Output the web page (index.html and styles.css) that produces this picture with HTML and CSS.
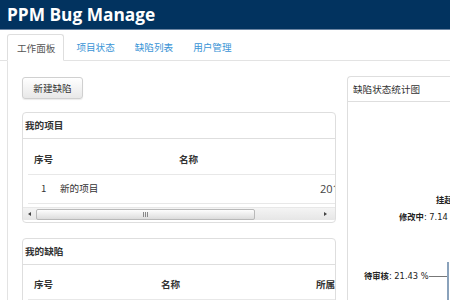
FILE: index.html
```html
<!DOCTYPE html>
<html lang="zh-CN">
<head>
<meta charset="utf-8">
<link rel="stylesheet" href="styles.css">
</head>
<body>
<div class="header"><span class="brand">PPM Bug Manage</span></div>
<div class="tabs">
  <span class="tab active">工作面板</span>
  <span class="tab">项目状态</span>
  <span class="tab">缺陷列表</span>
  <span class="tab">用户管理</span>
</div>
<div class="pane">
  <div class="leftcol">
    <button class="btn">新建缺陷</button>
    <div class="panel p1">
      <div class="ph">我的项目</div>
      <div class="tablewrap">
        <div class="trow thead">
          <span class="c1">序号</span><span class="c2">名称</span><span class="c3"></span>
        </div>
        <div class="trow tbody">
          <span class="c1 num">1</span><span class="c2b">新的项目</span><span class="c3 date">2014-05-01</span>
        </div>
      </div>
      <div class="scrollbar">
        <span class="arrow left"></span>
        <span class="thumb"><span class="grip"></span></span>
        <span class="arrow right"></span>
      </div>
    </div>
    <div class="panel p2">
      <div class="ph">我的缺陷</div>
      <div class="tablewrap">
        <div class="trow thead t2">
          <span class="d1">序号</span><span class="d2">名称</span><span class="d3">所属项目</span>
        </div>
      </div>
    </div>
  </div>
  <div class="rightcol">
    <div class="panel chartpanel">
      <div class="ph rh">缺陷状态统计图</div>
      <div class="chart">
        <span class="lbl l1"><b>挂起</b>: 7.14 %</span>
        <span class="lbl l2"><b>修改中</b>: 7.14 %</span>
        <span class="lbl l3"><b>待审核</b>: 21.43 %</span>
        <span class="leader"></span>
        <span class="pie"></span>
      </div>
    </div>
  </div>
</div>
</body>
</html>
```
FILE: styles.css
```css
* { box-sizing: border-box; }
html, body { margin: 0; padding: 0; width: 450px; height: 300px; overflow: hidden; background: #fff; }
body { font-family: "Noto Sans CJK SC", "Open Sans", sans-serif; font-size: 9.6px; color: #333; }

.header { height: 30px; background: #02335f; border-bottom: 1px solid #6d86a3; padding-left: 7px; }
.brand { font-family: "Open Sans", "Liberation Sans", sans-serif; font-weight: 700; font-size: 17.3px; color: #fff; line-height: 29px; display: inline-block; }

.tabs { display: flex; margin-top: 4px; padding-left: 7px; height: 27px; border-bottom: 1px solid #e3e3e3; }
.tab { display: block; flex: none; white-space: nowrap; padding: 0 10px 0 10px; line-height: 26px; color: #3a94d6; }
.tab.active { color: #555; border: 1px solid #dedede; border-bottom-color: #fff; border-radius: 3px 3px 0 0; background: #fff; height: 27px; padding: 0 8px 0 9px; margin-right: 2px; }

.pane { display: flex; margin-left: 7px; border-left: 1px solid #e3e3e3; padding: 15px 0 0 14px; gap: 11px; height: 240px; }
.leftcol { width: 314px; flex: none; display: flex; flex-direction: column; align-items: flex-start; }
.rightcol { flex: none; width: 120px; }

.btn { flex: none; font-family: inherit; font-size: 9.6px; color: #333; width: 61px; height: 22px; margin-top: 1px; border: 1px solid #d0d0d0; border-radius: 3px; background: linear-gradient(#ffffff, #e8e8e8); box-shadow: 0 1px 1px rgba(0,0,0,0.08); padding: 0; }

.panel { flex: none; border: 1px solid #dedede; border-radius: 4px; background: #fff; width: 314px; overflow: hidden; }
.p1 { margin-top: 13px; height: 111px; }
.p2 { margin-top: 15px; height: 80px; }
.ph { height: 26px; line-height: 25px; padding-left: 2px; font-weight: 700; color: #333; border-bottom: 1px solid #dedede; }

.tablewrap { padding: 0 0 0 5px; overflow: hidden; white-space: nowrap; }
.trow { display: flex; width: 400px; border-bottom: 1px solid #e8e8e8; }
.thead { height: 36px; padding-top: 13px; font-weight: 700; color: #333; }
.tbody { height: 29px; line-height: 27px; }
.c1 { width: 151px; padding-left: 6px; flex: none; }
.num { padding-left: 13px; width: 32px; }
.c2 { width: 140px; flex: none; }
.c2b { width: 260px; flex: none; }
.c3 { flex: none; }
.date { font-family: "Open Sans", sans-serif; font-size: 11px; color: #444; }
.t2 { height: 35px; padding-top: 12px; }
.d1 { width: 133px; padding-left: 6px; flex: none; }
.d2 { width: 155px; flex: none; }
.d3 { flex: none; }

.scrollbar { display: flex; align-items: center; height: 13px; margin: 3px 0 0 0; background: linear-gradient(#f4f4f4, #e6e6e6); border-top: 1px solid #e8e8e8; }
.arrow { width: 13px; height: 12px; position: relative; flex: none; }
.arrow.left::after { content: ""; position: absolute; left: 5px; top: 4px; border-style: solid; border-width: 2px 3px 2px 0; border-color: transparent #444 transparent transparent; }
.arrow.right { margin-left: auto; margin-right: 3px; }
.arrow.right::after { content: ""; position: absolute; left: 5px; top: 4px; border-style: solid; border-width: 2px 0 2px 3px; border-color: transparent transparent transparent #444; }
.thumb { width: 219px; height: 11px; border: 1px solid #b9b9b9; border-radius: 2px; background: linear-gradient(#fdfdfd, #dcdcdc); display: flex; justify-content: center; align-items: center; }
.grip { width: 5px; height: 5px; border-left: 1px solid #888; border-right: 1px solid #888; position: relative; }
.grip::after { content: ""; position: absolute; left: 1px; top: 0; width: 1px; height: 5px; background: #888; }

.chartpanel { width: 120px; height: 240px; border-radius: 4px 0 0 0; border-right: none; }
.rh { font-weight: 400; padding-left: 5px; height: 25px; }
.chart { position: relative; height: 215px; }
.lbl { position: absolute; font-family: "DejaVu Sans", sans-serif; font-size: 8.3px; color: #222; white-space: nowrap; }
.lbl b { font-family: "Noto Sans CJK SC", sans-serif; font-weight: 700; }
.l1 { left: 88px; top: 91px; }
.l2 { left: 51px; top: 108px; }
.l3 { left: 16px; top: 167px; }
.leader { position: absolute; left: 81px; top: 174px; width: 18px; height: 1px; background: #777; }
.pie { position: absolute; left: 99px; top: 160px; width: 60px; height: 40px; border-left: 2px solid #8aa2bb; }
```
